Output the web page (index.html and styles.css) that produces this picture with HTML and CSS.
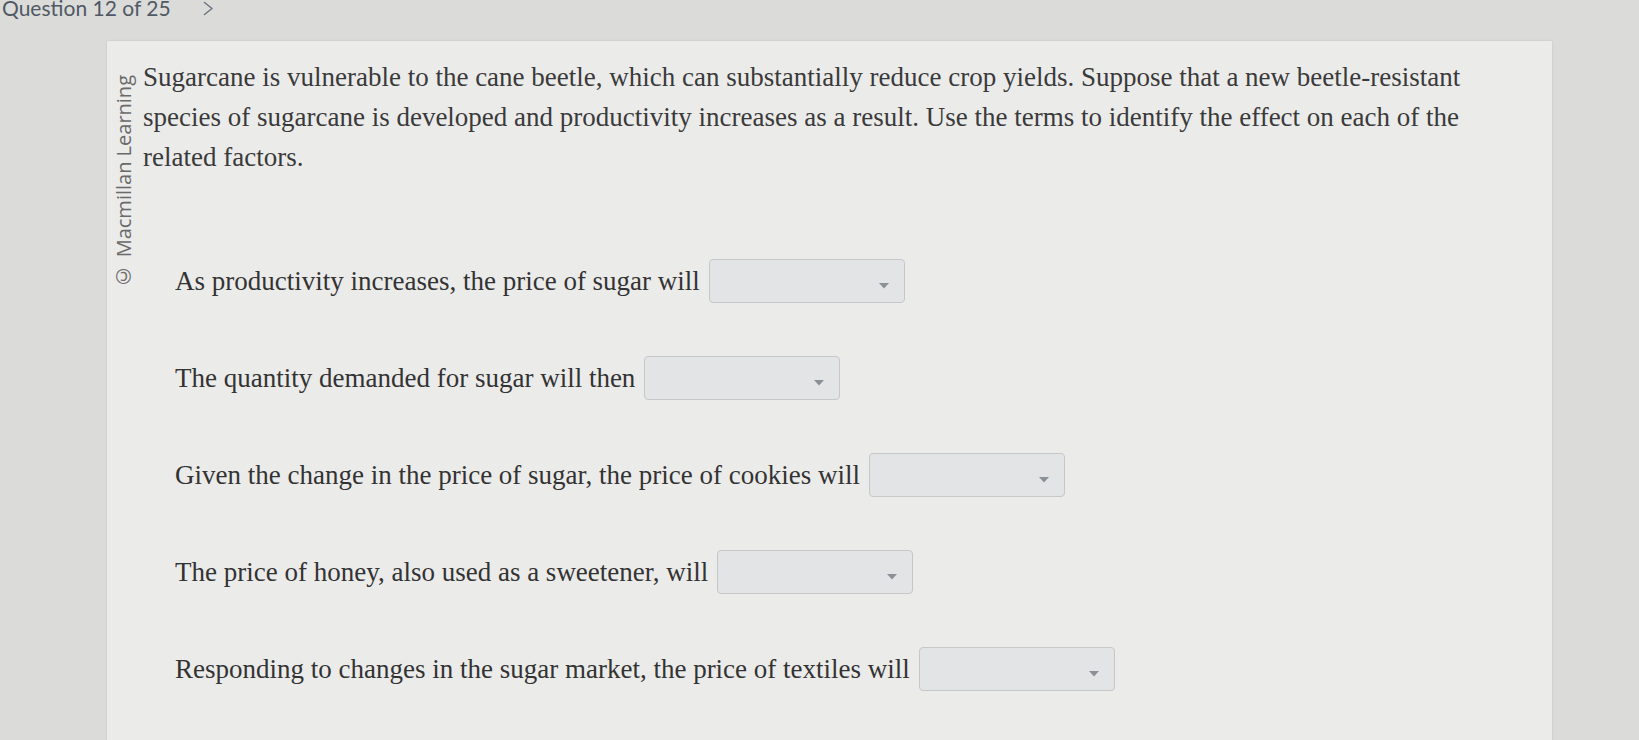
FILE: index.html
```html
<!DOCTYPE html>
<html lang="en">
<head>
<meta charset="utf-8">
<title>Question 12 of 25</title>
<link rel="stylesheet" href="styles.css">
</head>
<body>
  <header class="qnav">
    <span class="qtitle">Question 12 of 25</span>
    <span class="chev"><svg width="11" height="15" viewBox="0 0 11 15"><polyline points="1.5,1.5 9,7.5 1.5,13.5" fill="none" stroke="#6e7782" stroke-width="1.6" stroke-linecap="round" stroke-linejoin="round"/></svg></span>
  </header>
  <main class="card">
    <div class="credit">© Macmillan Learning</div>
    <div class="content">
      <p class="prompt">Sugarcane is vulnerable to the cane beetle, which can substantially reduce crop yields. Suppose that a new beetle-resistant species of sugarcane is developed and productivity increases as a result. Use the terms to identify the effect on each of the related factors.</p>
      <div class="questions">
        <div class="row"><span class="qtext">As productivity increases, the price of sugar will</span><div class="dropdown"><svg class="caret" width="10" height="6" viewBox="0 0 10 6"><polygon points="0,0 10,0 5,5.5" fill="#8b9097"/></svg></div></div>
        <div class="row"><span class="qtext">The quantity demanded for sugar will then</span><div class="dropdown"><svg class="caret" width="10" height="6" viewBox="0 0 10 6"><polygon points="0,0 10,0 5,5.5" fill="#8b9097"/></svg></div></div>
        <div class="row"><span class="qtext">Given the change in the price of sugar, the price of cookies will</span><div class="dropdown"><svg class="caret" width="10" height="6" viewBox="0 0 10 6"><polygon points="0,0 10,0 5,5.5" fill="#8b9097"/></svg></div></div>
        <div class="row"><span class="qtext">The price of honey, also used as a sweetener, will</span><div class="dropdown"><svg class="caret" width="10" height="6" viewBox="0 0 10 6"><polygon points="0,0 10,0 5,5.5" fill="#8b9097"/></svg></div></div>
        <div class="row"><span class="qtext">Responding to changes in the sugar market, the price of textiles will</span><div class="dropdown"><svg class="caret" width="10" height="6" viewBox="0 0 10 6"><polygon points="0,0 10,0 5,5.5" fill="#8b9097"/></svg></div></div>
      </div>
    </div>
  </main>
</body>
</html>
```

FILE: styles.css
```css
html, body {
  margin: 0;
  padding: 0;
}
body {
  background: #dbdbda;
  height: 740px;
  overflow: hidden;
}
.qnav {
  display: flex;
  align-items: center;
  height: 20px;
  margin-top: -2px;
  padding-left: 2px;
}
.qtitle {
  font-family: Lato, "Open Sans", sans-serif;
  font-size: 21px;
  line-height: 20px;
  color: #4f5964;
}
.chev {
  display: flex;
  margin-left: 32px;
  margin-top: 1px;
}
.card {
  display: flex;
  align-items: flex-start;
  margin-top: 23px;
  margin-left: 107px;
  width: 1445px;
  min-height: 800px;
  box-sizing: border-box;
  padding: 16px 0 0 6px;
  background: #ebebea;
  box-shadow: 0 0 2px rgba(0, 0, 0, 0.12);
}
.credit {
  writing-mode: vertical-rl;
  transform: rotate(180deg);
  font-family: "Open Sans", "Noto Sans", sans-serif;
  font-size: 20px;
  line-height: 22px;
  width: 22px;
  color: #6a6a6a;
  margin-top: 18px;
  white-space: nowrap;
}
.content {
  margin-left: 8px;
}
.prompt {
  margin: 0;
  width: 1345px;
  font-family: "Liberation Serif", "Times New Roman", serif;
  font-size: 27px;
  line-height: 40px;
  color: #3a3a3a;
}
.questions {
  display: flex;
  flex-direction: column;
  gap: 53px;
  margin-top: 82px;
  padding-left: 32px;
}
.row {
  display: flex;
  align-items: center;
  gap: 9px;
}
.qtext {
  font-family: "Liberation Serif", "Times New Roman", serif;
  font-size: 27px;
  line-height: 40px;
  color: #333333;
}
.dropdown {
  box-sizing: border-box;
  width: 196px;
  height: 44px;
  border: 1px solid #c5c7c9;
  border-radius: 4px;
  background: #e2e4e5;
  display: flex;
  justify-content: flex-end;
  align-items: center;
  padding: 10px 15px 0 0;
}
.caret {
  display: block;
}
```
